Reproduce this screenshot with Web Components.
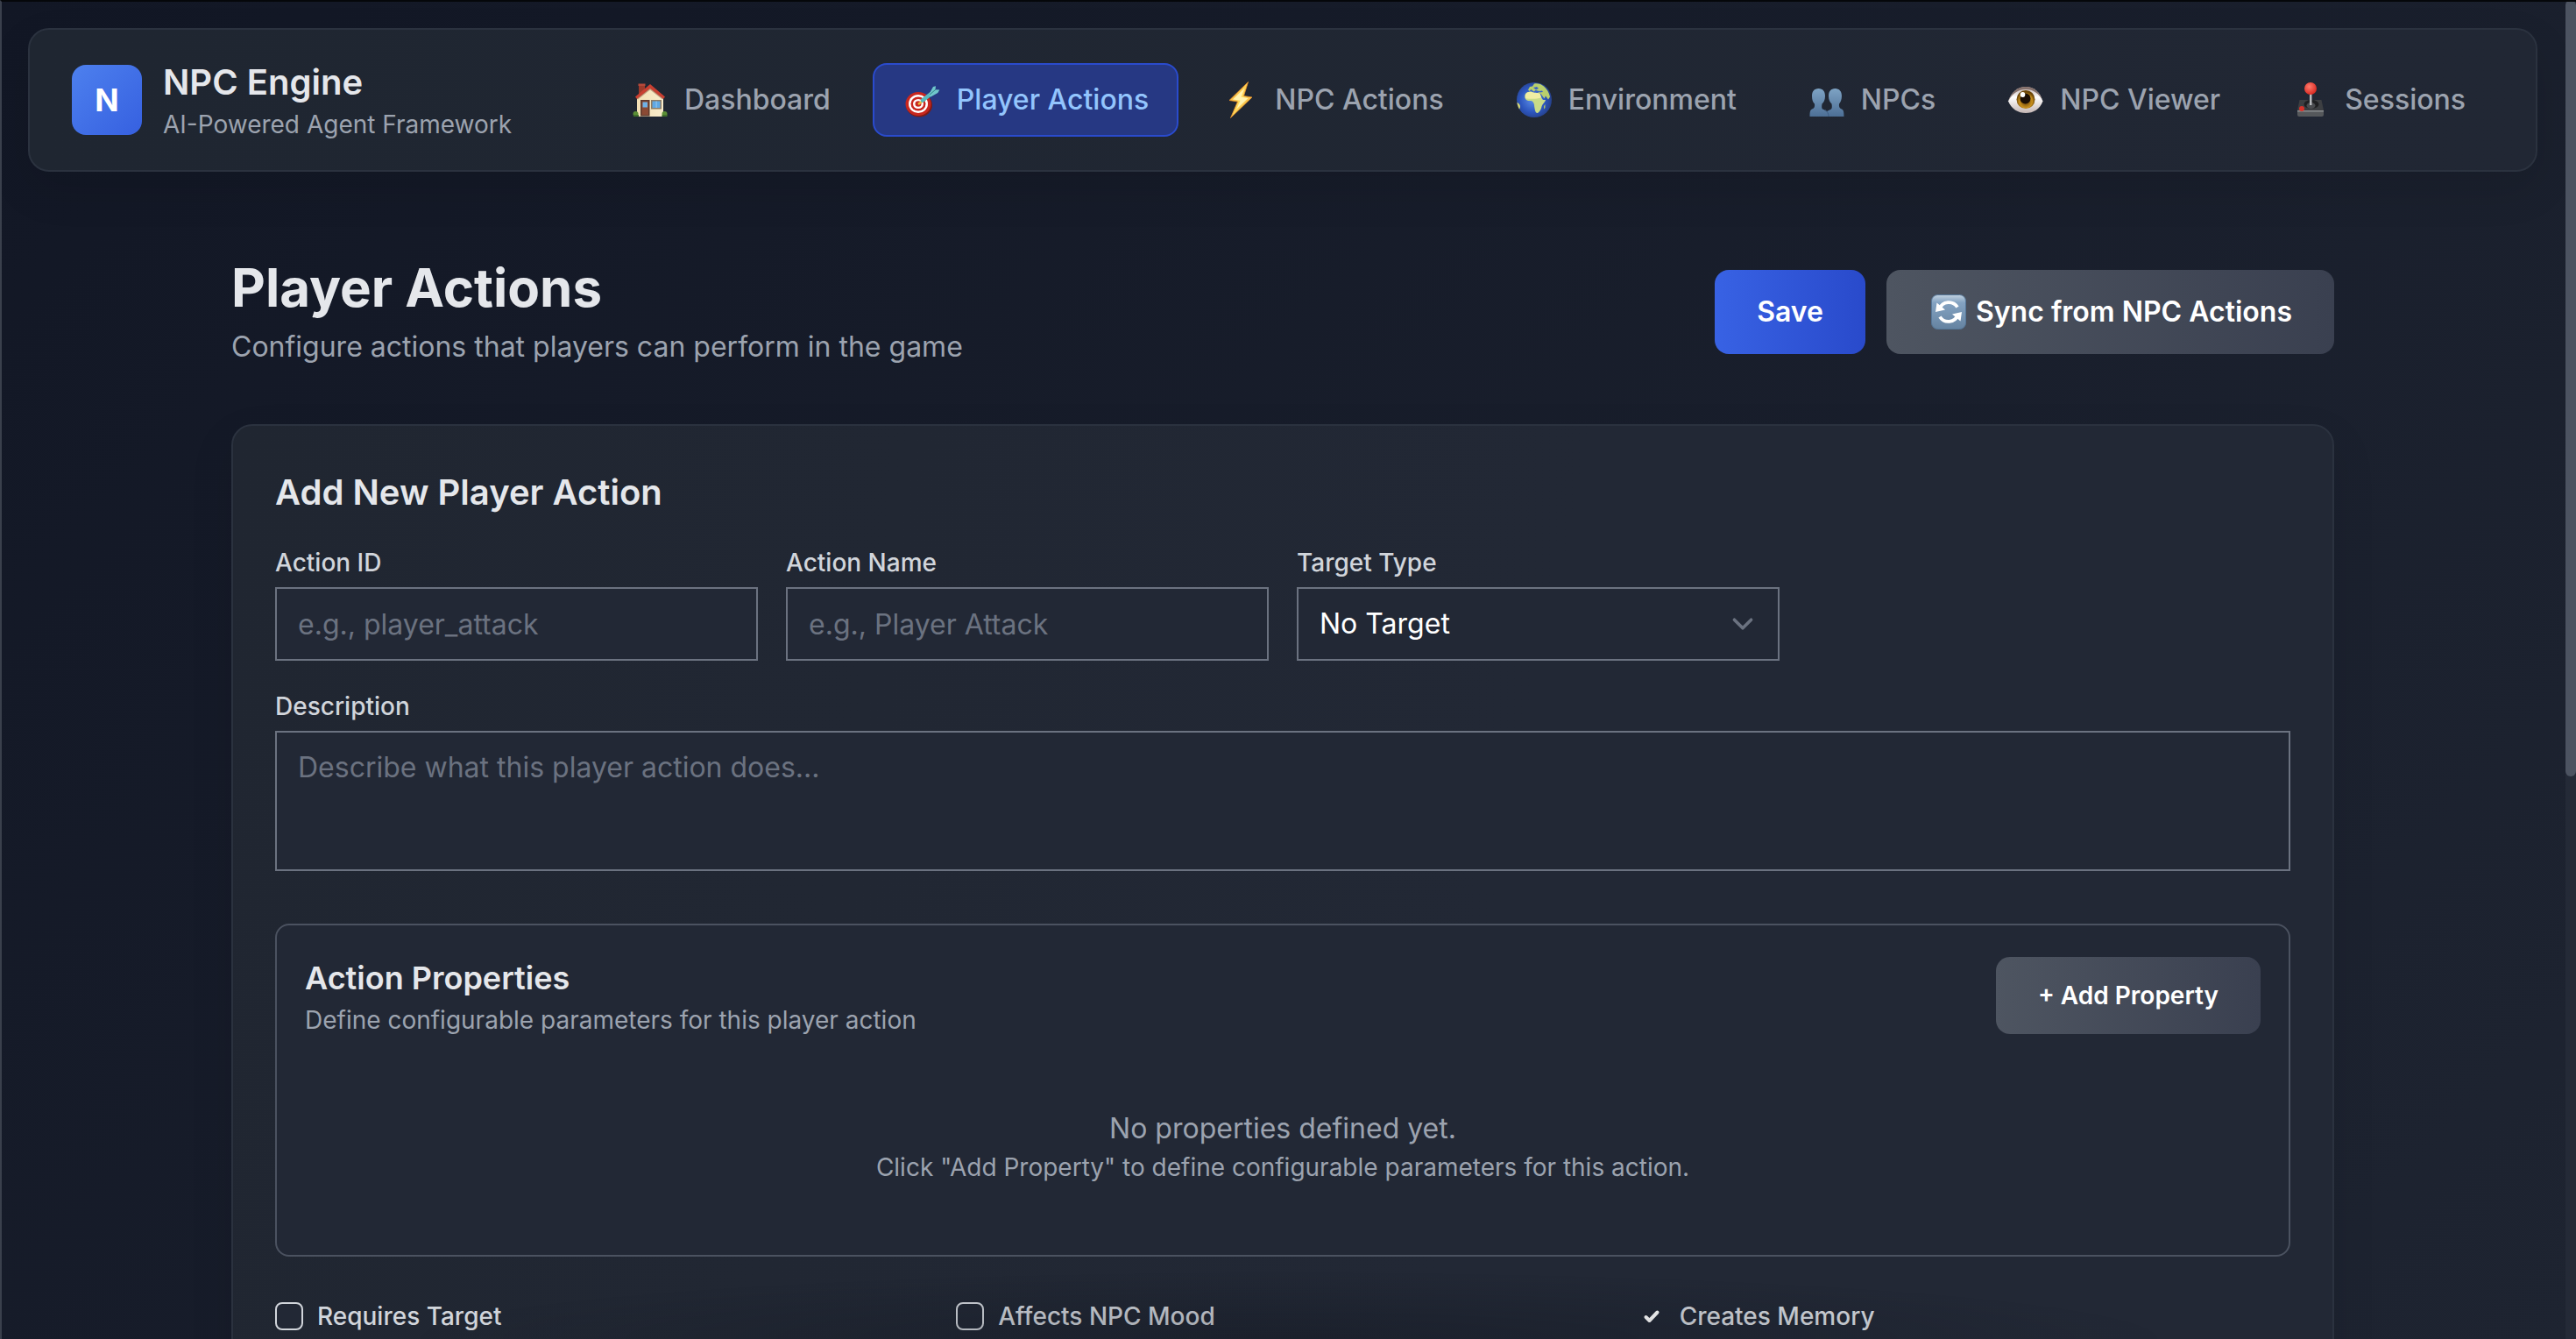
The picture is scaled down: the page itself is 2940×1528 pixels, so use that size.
<!DOCTYPE html>
<html lang="en">
<head>
<meta charset="utf-8">
<title>NPC Engine</title>
<style>
  html, body { margin: 0; height: 100%; }
  body {
    font-family: Inter, "Liberation Sans", sans-serif;
    font-size: 32px;
    line-height: 48px;
    color: #e5e7eb;
    background: #1c2330;
    overflow: hidden;
  }
</style>
</head>
<body>
<app-shell>
  <app-header slot="header">
    <nav-item icon="house" href="#dashboard">Dashboard</nav-item>
    <nav-item icon="target" href="#player-actions" active>Player Actions</nav-item>
    <nav-item icon="bolt" href="#npc-actions">NPC Actions</nav-item>
    <nav-item icon="globe" href="#environment">Environment</nav-item>
    <nav-item icon="people" href="#npcs">NPCs</nav-item>
    <nav-item icon="eye" href="#npc-viewer">NPC Viewer</nav-item>
    <nav-item icon="joystick" href="#sessions">Sessions</nav-item>
  </app-header>
  <page-heading>
    <span slot="title">Player Actions</span>
    <span slot="subtitle">Configure actions that players can perform in the game</span>
    <ui-button variant="primary">Save</ui-button>
    <ui-button icon="sync">Sync from NPC Actions</ui-button>
  </page-heading>
  <action-form></action-form>
</app-shell>

<script>
const ICONS = {
  house: `
    <defs><linearGradient id="w" x1="0" y1="0" x2="1" y2="0"><stop offset="0" stop-color="#f3dfb4"/><stop offset="1" stop-color="#f8eccb"/></linearGradient></defs>
    <path d="M9 4h7v11H9z" fill="#9c3a2b"/><path d="M8.500 3.500h8v2.500h-8z" fill="#b5483a"/>
    <path d="M7 20 22 7l15 13v21H7z" fill="url(#w)"/>
    <path d="M22 4 5 18.500l2 2.500L22 9l15 12 2-2.500z" fill="#c93f31"/>
    <path d="M22 8.500 7 20.500l1 1L22 10.500l14 11 1-1z" fill="#8c5b43" opacity=".5"/>
    <path d="M11 22h10.500v18.500H11z" fill="#5d3a2e"/><path d="M12.500 23.500h7.500V39h-7.500z" fill="#8a4a34"/>
    <path d="M13.500 24.500h5.500v6h-5.500z" fill="#6fb2e6"/>
    <path d="M23 22h12v10.500H23z" fill="#8d7b63"/><path d="M24.500 23.500h9v7.500h-9z" fill="#5fa8e4"/><path d="M28.700 23.500h.8v7.500h-.8z" fill="#a9cdea"/>
    <circle cx="5.500" cy="38" r="3" fill="#5c8f35"/><circle cx="38.500" cy="38" r="3" fill="#5c8f35"/><path d="M3 39h6v2H3zM35.500 39h6v2h-6z" fill="#40702a"/>`,
  target: `
    <ellipse cx="18" cy="28" rx="15" ry="13.500" fill="#7e1a15"/>
    <ellipse cx="17" cy="26.500" rx="14.500" ry="13.500" fill="#c8271f"/>
    <ellipse cx="17" cy="26.500" rx="11" ry="10.500" fill="#fff"/>
    <ellipse cx="17" cy="26.500" rx="8.500" ry="8" fill="#c8271f"/>
    <ellipse cx="17" cy="26.500" rx="6" ry="5.600" fill="#fff"/>
    <ellipse cx="17" cy="26.500" rx="3.500" ry="3.300" fill="#c8271f"/>
    <path d="m17 27 8-6" stroke="#e8b93b" stroke-width="2.500"/>
    <path d="m22 22.500 9-7" stroke="#58b9bd" stroke-width="4.500" stroke-linecap="round"/>
    <path d="m29 16 5-9 3-.8-.5 4 4.800.3-2 3.500-8 4.500z" fill="#6fc6cb"/>
    <path d="m30 16 7-6" stroke="#2f7f88" stroke-width="1"/>`,
  bolt: `
    <defs><linearGradient id="b" x1="0" y1="0" x2="1" y2="1"><stop offset="0" stop-color="#f29a2e"/><stop offset=".5" stop-color="#ffd95a"/><stop offset="1" stop-color="#f0a030"/></linearGradient></defs>
    <path d="M30.500 1.500 9 22.500l9.500 1.500-8 18.500L35 19l-9.500-1.500z" fill="url(#b)" stroke="#e88f2a" stroke-width=".8" stroke-linejoin="round"/>
    <path d="M26.500 8.500 13 21.500l8.500 1.200-4.500 10L30.500 20l-8-1.200z" fill="#fff3b0"/>`,
  globe: `
    <defs><radialGradient id="g" cx=".45" cy=".5" r=".55"><stop offset="0" stop-color="#5c8ee8"/><stop offset=".65" stop-color="#2c55bd"/><stop offset="1" stop-color="#26418b"/></radialGradient></defs>
    <circle cx="22" cy="22" r="20" fill="url(#g)"/>
    <path d="M11.500 16c1-2.500 3.500-3.500 7-3.500 1 0 2 1.500 4 1.500 2.500 0 4-.5 6 .5 1 2.500 2 6 3.500 7.500 1.500 0 3-.3 3 .5-1 2.500-4 4.500-4.500 7-.5 3-2 6-4.500 7.500-1.500.3-2.500-1-3-3-.5-2.500-1-4.500-1-6.500-.5-2.500-2-4.500-4-4.500s-4 .3-5.500-1.500c-1.500-1.500-1.500-3.500-1-5.500z" fill="#c9db87"/>
    <path d="M12 16c1-2.500 3.500-3.500 6.500-3.300 3 1.800 7 .5 10 2l1.500 4.500c-5 2-12 2-18 1z" fill="#f0eda3"/>
    <path d="M15 10.500 17 7l3-.5 2-3c4-.8 8 .5 11 3 3.500 3 6 7 7 12l-2 3-3-4-1.500 3-4-5.500-3-1 1.500-2-4.500-1-2 1.500-3-2.500-2 2z" fill="#b9cf6c"/>
    <path d="M21 8l4-1 2 2-3 1.500zM27 12l4-.5 1 1.500-4 .5z" fill="#3c66c4"/>
    <path d="M2.500 25c1.500.5 3 2 3.500 4 0 2-.5 3-1 3.500C3.500 30 2.700 27.500 2.500 25z" fill="#d5d572"/>
    <path d="M33 29l1.500-2v4l-1.500 1.500z" fill="#a8c06b"/>`,
  people: `
    <defs><linearGradient id="p" x1="0" y1="0" x2="0" y2="1"><stop offset="0" stop-color="#7ea3c4"/><stop offset="1" stop-color="#4d6f96"/></linearGradient></defs>
    <path d="M31.500 9c4.800 0 7.500 3.500 7.500 8.500 0 4-1.500 7.500-3 9-.5 3.500.5 5 3 6 2 1 2.500 3 2.500 8.500H22v-6l5-2.500c1-.8 1-3.500.5-6-2-1.500-3.500-5-3.500-9C24 12.500 26.500 9 31.500 9z" fill="url(#p)"/>
    <path d="M12.500 9c5 0 7.500 3.500 7.500 8.500 0 4-1.500 7.500-3.500 9-.5 3-.5 5 .5 6 4 1.500 7 3 7 8.500H2.500c0-5.500.5-7.500 2.500-8.500 2.500-1 3.500-2.500 3-6-2-1.500-3-5-3-9C5 12.500 7.500 9 12.500 9z" fill="url(#p)"/>
    <path d="M20 33.500c2.500 1.500 4 4 4 7.500" stroke="#3d5c82" stroke-width="1" fill="none"/>`,
  eye: `
    <defs><radialGradient id="i" cx=".5" cy=".6" r=".5"><stop offset="0" stop-color="#5b3608"/><stop offset=".7" stop-color="#c9901c"/><stop offset="1" stop-color="#6c4608"/></radialGradient>
    <linearGradient id="e" x1="0" y1="0" x2="0" y2="1"><stop offset="0" stop-color="#b8a9a6"/><stop offset=".4" stop-color="#fff"/><stop offset="1" stop-color="#c4b6b4"/></linearGradient></defs>
    <path d="M2 23.500C6 12.500 13 7 22 7s16 5.500 19.500 16.500C38 32.500 31 37 22 37S6 32.500 2 23.500z" fill="url(#e)"/>
    <path d="M2 23.500C6 12.500 13 7 22 7s16 5.500 19.500 16.500C37 14.500 31 10 22 10S7 14.500 2 23.500z" fill="#85716c"/>
    <circle cx="22" cy="21.500" r="10.500" fill="url(#i)"/>
    <circle cx="21.500" cy="20.500" r="6" fill="#1c0f05"/>
    <ellipse cx="18.500" cy="16" rx="2.800" ry="3" fill="#fff"/>`,
  joystick: `
    <defs><radialGradient id="r" cx=".4" cy=".35" r=".65"><stop offset="0" stop-color="#ff7a6c"/><stop offset="1" stop-color="#d92a22"/></radialGradient></defs>
    <path d="M9.500 22h25l2.500 12H7z" fill="#3d3f42"/><path d="M7 34h30v5a2 2 0 0 1-2 2H9a2 2 0 0 1-2-2z" fill="#55585b"/>
    <path d="M7 34h30v1.500H7z" fill="#8b8e91"/>
    <ellipse cx="23" cy="27" rx="8.500" ry="5" fill="#1f2022"/>
    <ellipse cx="22.500" cy="28.500" rx="5" ry="3.500" fill="#4a4c4f"/>
    <path d="M21 14h2.500v14H21z" fill="#b8bbbe"/>
    <circle cx="22" cy="9" r="7" fill="url(#r)"/><circle cx="12" cy="32" r="3" fill="#d8322a"/>`,
  sync: `
    <defs><linearGradient id="s" x1="0" y1="0" x2="0" y2="1"><stop offset="0" stop-color="#c3d2e0"/><stop offset=".22" stop-color="#84a3c2"/><stop offset="1" stop-color="#6583a1"/></linearGradient></defs>
    <rect x="2.500" y="2.500" width="39" height="39" rx="7" fill="url(#s)" stroke="#56789a"/>
    <path d="M11.500 18.500A11.500 11.500 0 0 1 32 16.500M32.500 25.500A11.500 11.500 0 0 1 12 27.500" fill="none" stroke="#fff" stroke-width="3.800"/>
    <path d="M7 22 8.500 11.500l9.500 8zM37 22 35.500 32.500l-9.500-8z" fill="#fff"/>`
};

const define = (name, html, setup) => customElements.define(name, class extends HTMLElement {
  connectedCallback() {
    if (this.shadowRoot) return;
    const root = this.attachShadow({ mode: 'open' });
    root.innerHTML = typeof html === 'function' ? html(this) : html;
    if (setup) setup(root, this);
  }
});

define('emoji-icon', el => `
  <style>
    :host { display: inline-flex; flex: none; width: 46px; height: 44px; }
    svg { display: block; width: 100%; height: 100%; }
  </style>
  <svg viewBox="0 0 44 44" aria-hidden="true">${ICONS[el.getAttribute('name')] || ''}</svg>`);

define('nav-item', el => `
  <style>
    :host { display: block; }
    a {
      display: flex; align-items: center; gap: 16px;
      padding: 16px 32px; border-radius: 16px;
      color: #9ca3af; font-weight: 500; text-decoration: none; white-space: nowrap;
    }
    :host([active]) a { color: #93c5fd; background: #263883; border: 2px solid #2a4bcd; }
  </style>
  <a href="${el.getAttribute('href')}"><emoji-icon name="${el.getAttribute('icon')}"></emoji-icon><span><slot></slot></span></a>`);

define('app-header', `
  <style>
    :host {
      display: flex; align-items: center; justify-content: space-between;
      margin: 32px; padding: 32px 48px;
      background: linear-gradient(90deg, #1f2631, #212734);
      border: 2px solid #2b323f; border-radius: 24px;
      box-shadow: 0 20px 50px rgba(0, 0, 0, .1);
    }
    .brand { display: flex; align-items: center; gap: 24px; }
    .logo {
      display: flex; align-items: center; justify-content: center;
      width: 80px; height: 80px; border-radius: 16px;
      background: linear-gradient(135deg, #4d80ee, #3660e0);
      color: #fff; font-size: 36px; font-weight: 700;
    }
    .name { font-size: 40px; line-height: 56px; font-weight: 600; }
    .tag { font-size: 28px; line-height: 40px; color: #9ca3af; }
    nav { display: flex; align-items: center; gap: 16px; }
  </style>
  <div class="brand">
    <div class="logo">N</div>
    <div><div class="name">NPC Engine</div><div class="tag">AI-Powered Agent Framework</div></div>
  </div>
  <nav><slot></slot></nav>`);

define('ui-button', el => `
  <style>
    :host { display: block; }
    button {
      display: flex; align-items: center; gap: 8px;
      padding: 24px 48px; border: 0; border-radius: 16px;
      font: inherit; font-weight: 600; color: #fff; white-space: nowrap;
      background: linear-gradient(90deg, #4e5561, #3a4050);
    }
    :host([variant=primary]) button { background: linear-gradient(90deg, #3862e4, #294acb); }
    :host([size=small]) button { font-size: 28px; line-height: 40px; }
  </style>
  <button type="button">${el.hasAttribute('icon') ? `<emoji-icon name="${el.getAttribute('icon')}"></emoji-icon>` : ''}<span><slot></slot></span></button>`);

define('page-heading', `
  <style>
    :host { display: flex; align-items: center; justify-content: space-between; }
    h1 { margin: 0 0 8px; font-size: 60px; line-height: 72px; font-weight: 700; }
    p { margin: 0; color: #9ca3af; }
    .actions { display: flex; gap: 24px; }
  </style>
  <div><h1><slot name="title"></slot></h1><p><slot name="subtitle"></slot></p></div>
  <div class="actions"><slot></slot></div>`);

define('form-field', el => {
  const type = el.getAttribute('type') || 'text';
  const hint = el.getAttribute('placeholder') || '';
  const control = {
    text: `<input id="control" type="text" placeholder="${hint}">`,
    area: `<textarea id="control" placeholder="${hint}"></textarea>`,
    select: `<div class="select"><select id="control"><option>${el.getAttribute('value')}</option></select>
      <svg viewBox="0 0 20 20" aria-hidden="true"><path d="m6 8 4 4 4-4" fill="none" stroke="#6b7280" stroke-width="1.5" stroke-linecap="round" stroke-linejoin="round"/></svg></div>`
  }[type];
  return `
  <style>
    :host { display: block; }
    label { display: block; margin-bottom: 8px; font-size: 28px; line-height: 40px; font-weight: 500; color: #d1d5db; }
    input, textarea, select {
      display: block; box-sizing: border-box; width: 100%; margin: 0; padding: 16px 24px;
      border: 2px solid #6b7280; border-radius: 0; outline: 0;
      background: #222835; color: #fff; font: inherit; appearance: none;
    }
    input, select { height: 84px; }
    textarea { height: 160px; resize: none; }
    ::placeholder { color: #6b7280; opacity: 1; }
    .select { display: grid; align-items: center; }
    .select > * { grid-area: 1 / 1; }
    svg { justify-self: end; width: 48px; height: 48px; margin-right: 18px; pointer-events: none; }
  </style>
  <label for="control">${el.getAttribute('label')}</label>${control}`;
});

define('check-option', el => `
  <style>
    :host { display: block; }
    label { display: flex; align-items: center; gap: 16px; font-size: 28px; line-height: 40px; font-weight: 500; color: #d1d5db; }
    .box { display: grid; flex: none; width: 32px; height: 32px; }
    .box > * { grid-area: 1 / 1; }
    input { box-sizing: border-box; width: 32px; height: 32px; margin: 0; border: 2px solid #d1d5db; border-radius: 8px; background: #222835; appearance: none; }
    input:checked { border-color: transparent; background: none; }
    svg { width: 32px; height: 32px; pointer-events: none; visibility: hidden; }
    input:checked + svg { visibility: visible; }
  </style>
  <label><span class="box"><input type="checkbox"${el.hasAttribute('checked') ? ' checked' : ''}><svg viewBox="0 0 32 32" aria-hidden="true"><path d="m9.500 17 4 4 9-9.500" fill="none" stroke="#fff" stroke-width="4" stroke-linecap="round" stroke-linejoin="round"/></svg></span><span><slot></slot></span></label>`);

define('property-panel', `
  <style>
    :host { display: block; padding: 32px; border: 2px solid #4b5260; border-radius: 16px; background: #222835; }
    header { display: flex; align-items: center; justify-content: space-between; }
    h3 { margin: 0; font-size: 36px; line-height: 56px; font-weight: 600; }
    p { margin: 0; }
    .note { font-size: 28px; line-height: 40px; }
    header, .empty { color: #9ca3af; }
    h3 { color: #e5e7eb; }
    .empty { margin-top: 32px; padding: 48px 0; text-align: center; }
  </style>
  <header>
    <div><h3>Action Properties</h3><p class="note">Define configurable parameters for this player action</p></div>
    <ui-button size="small">+ Add Property</ui-button>
  </header>
  <div class="empty"><p>No properties defined yet.</p><p class="note">Click "Add Property" to define configurable parameters for this action.</p></div>`);

define('action-form', `
  <style>
    :host {
      display: block; margin-top: 64px; padding: 48px;
      background: linear-gradient(100deg, #202631, #222835 60%);
      border: 2px solid #2b323f; border-radius: 24px;
      box-shadow: 0 20px 50px rgba(0, 0, 0, .1);
    }
    h2 { margin: 0 0 32px; font-size: 40px; line-height: 56px; font-weight: 600; }
    .fields { display: grid; grid-template-columns: repeat(4, 1fr); gap: 32px; }
    .wide { grid-column: 1 / -1; }
    property-panel { margin: 60px 0 48px; }
    .options { display: grid; grid-template-columns: repeat(3, 1fr); gap: 32px; }
  </style>
  <h2>Add New Player Action</h2>
  <div class="fields">
    <form-field label="Action ID" placeholder="e.g., player_attack"></form-field>
    <form-field label="Action Name" placeholder="e.g., Player Attack"></form-field>
    <form-field label="Target Type" type="select" value="No Target"></form-field>
    <form-field class="wide" label="Description" type="area" placeholder="Describe what this player action does..."></form-field>
  </div>
  <property-panel></property-panel>
  <div class="options">
    <check-option>Requires Target</check-option>
    <check-option>Affects NPC Mood</check-option>
    <check-option checked>Creates Memory</check-option>
  </div>`);

define('app-shell', `
  <style>
    :host {
      display: flex; height: 100vh; overflow: hidden; box-sizing: border-box;
      background: linear-gradient(135deg, #121725, #1e2431);
    }
    .content { flex: 1; min-width: 0; }
    main { max-width: 2400px; margin: 96px auto 0; padding-bottom: 96px; }
    .track { flex: none; width: 12px; background: #242a37; }
    .thumb { height: 58%; border-radius: 6px; background: #4c5361; }
    .frame {
      position: fixed; inset: 0; pointer-events: none;
      border-left: 2px solid #3a404c; border-top: 2px solid #05070a;
      background: radial-gradient(ellipse 34% 5% at 50% 100%, rgba(8, 12, 20, .25), transparent);
    }
  </style>
  <div class="content">
    <slot name="header"></slot>
    <main><slot></slot></main>
  </div>
  <div class="track"><div class="thumb"></div></div>
  <div class="frame"></div>`);
</script>
</body>
</html>
